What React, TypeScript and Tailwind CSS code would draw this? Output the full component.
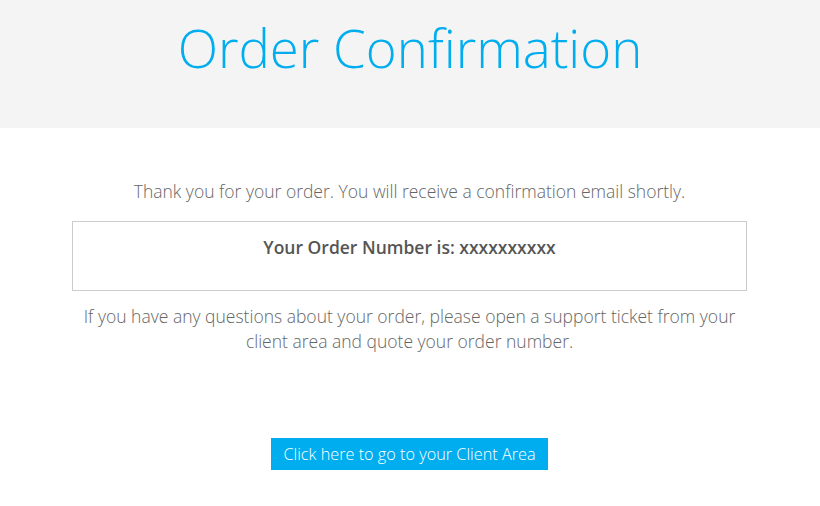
export default function App() {
  return (
    <div className="min-h-[506px] bg-white" style={{fontFamily: '"Open Sans", sans-serif'}}>
      <div className="h-[128px] bg-[#f4f4f4] flex justify-center pt-[15px]">
        <h1 className="text-[52.75px] leading-[66px] font-light text-[#00aeef]">Order Confirmation</h1>
      </div>

      <div className="flex flex-col items-center pl-[72px] pr-[73px] pt-[51px]">
        <p className="text-[17.5px] leading-[25px] font-light text-[#666]">Thank you for your order. You will receive a confirmation email shortly.</p>

        <div className="mt-[17px] w-full h-[70px] border border-[#ccc] flex justify-center pt-[13px]">
          <p className="text-[17.5px] leading-[24px] font-semibold text-[#555]">Your Order Number is: xxxxxxxxxx</p>
        </div>

        <p className="mt-[13px] max-w-[670px] text-center text-[17.5px] leading-[25px] font-light text-[#666]">
          If you have any questions about your order, please open a support ticket from your client area and quote your order number.
        </p>

        <button className="mt-[84px] h-[32px] px-[12px] bg-[#00aeef] text-white text-[16.25px] font-light">Click here to go to your Client Area</button>
      </div>
    </div>
  )
}
